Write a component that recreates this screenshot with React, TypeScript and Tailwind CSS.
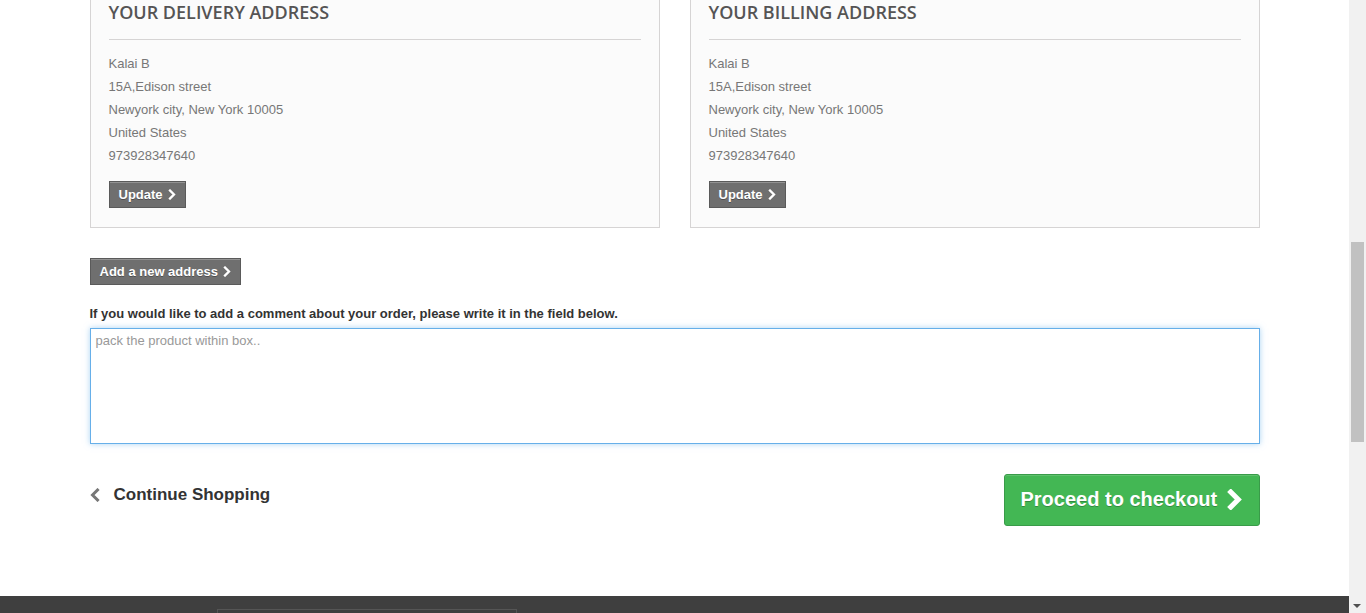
import React from "react";

const Chevron = ({ className = "", w = 3 }: { className?: string; w?: number }) => (
  <svg viewBox="0 0 10 14" className={className} fill="none" stroke="currentColor" strokeWidth={w} strokeLinecap="square">
    <path d="M2.5 2 L7.5 7 L2.5 12" />
  </svg>
);

const SmallButton = ({ label }: { label: string }) => (
  <button className="flex items-center gap-[5px] h-[27px] px-[9px] bg-[#6f6f6f] border border-[#5a5a5a] shadow-[inset_0_1px_0_rgba(255,255,255,0.25)] text-white font-bold text-[13px] [text-shadow:0_1px_0_rgba(0,0,0,0.3)] leading-none">
    <span>{label}</span>
    <Chevron className="w-[8px] h-[11px]" />
  </button>
);

const AddressCard = ({ title }: { title: string }) => (
  <div className="w-[570px] border border-[#d6d4d4] bg-[#fbfbfb] px-[18px] pt-[18px] pb-[19px]">
    <h3 className="font-['Open_Sans',sans-serif] text-[18px] leading-[24px] text-[#555454] font-semibold uppercase pb-[15px] border-b border-[#d6d4d4]">
      {title}
    </h3>
    <ul className="pt-[12px] text-[13px] leading-[23px] text-[#777777]">
      <li>Kalai B</li>
      <li>15A,Edison street</li>
      <li>Newyork city, New York 10005</li>
      <li>United States</li>
      <li>973928347640</li>
    </ul>
    <div className="pt-[14px]">
      <SmallButton label="Update" />
    </div>
  </div>
);

export default function App() {
  return (
    <div className="flex w-[1366px] h-[613px] overflow-hidden bg-white font-['Liberation_Sans',Arial,sans-serif]">
      <div className="flex flex-col w-[1349px] h-[613px]">
        <main className="flex-1">
          <div className="w-[1170px] mx-auto mt-[-19px]">
            <div className="flex gap-[30px]">
              <AddressCard title="Your delivery address" />
              <AddressCard title="Your billing address" />
            </div>
            <div className="mt-[30px]">
              <SmallButton label="Add a new address" />
            </div>
            <p className="mt-[20px] text-[13px] leading-[18px] font-bold text-[#333333]">
              If you would like to add a comment about your order, please write it in the field below.
            </p>
            <textarea
              className="mt-[5px] block w-full h-[116px] resize-none border border-[#66afe9] shadow-[0_0_6px_rgba(102,175,233,0.55)] outline-none px-[5px] py-[3px] text-[13px] leading-[18px] text-[#555] placeholder:text-[#999] bg-white"
              placeholder="pack the product within box.."
            />
            <div className="flex items-center justify-between mt-[30px]">
              <a className="flex items-center gap-[14px] text-[17px] font-bold text-[#333333] mt-[-10px]">
                <Chevron className="w-[10px] h-[14px] text-[#777777] rotate-180" />
                <span>Continue Shopping</span>
              </a>
              <button className="flex items-center gap-[10px] h-[52px] pl-[16px] pr-[16px] pb-[2px] w-[256px] rounded-[3px] bg-[#43b754] border border-[#399b49] shadow-[inset_0_1px_0_rgba(255,255,255,0.15)] text-white font-bold text-[20px] [text-shadow:0_1px_0_rgba(0,0,0,0.25)]">
                <span>Proceed to checkout</span>
                <Chevron className="w-[15px] h-[21px]" w={3.4} />
              </button>
            </div>
          </div>
        </main>
        <footer className="h-[17px] bg-[#3f3f3f] flex-none">
          <div className="ml-[217px] mt-[13px] w-[300px] h-[10px] border border-[#555555]" />
        </footer>
      </div>
      <div className="relative flex flex-col w-[17px] h-[613px] bg-[#f1f1f1]">
        <div className="absolute top-[242px] left-[2px] w-[13px] h-[200px] bg-[#c1c1c1]" />
        <div className="absolute bottom-[5px] left-[4px] w-0 h-0 border-l-[4px] border-r-[4px] border-t-[4px] border-l-transparent border-r-transparent border-t-[#505050]" />
      </div>
    </div>
  );
}
